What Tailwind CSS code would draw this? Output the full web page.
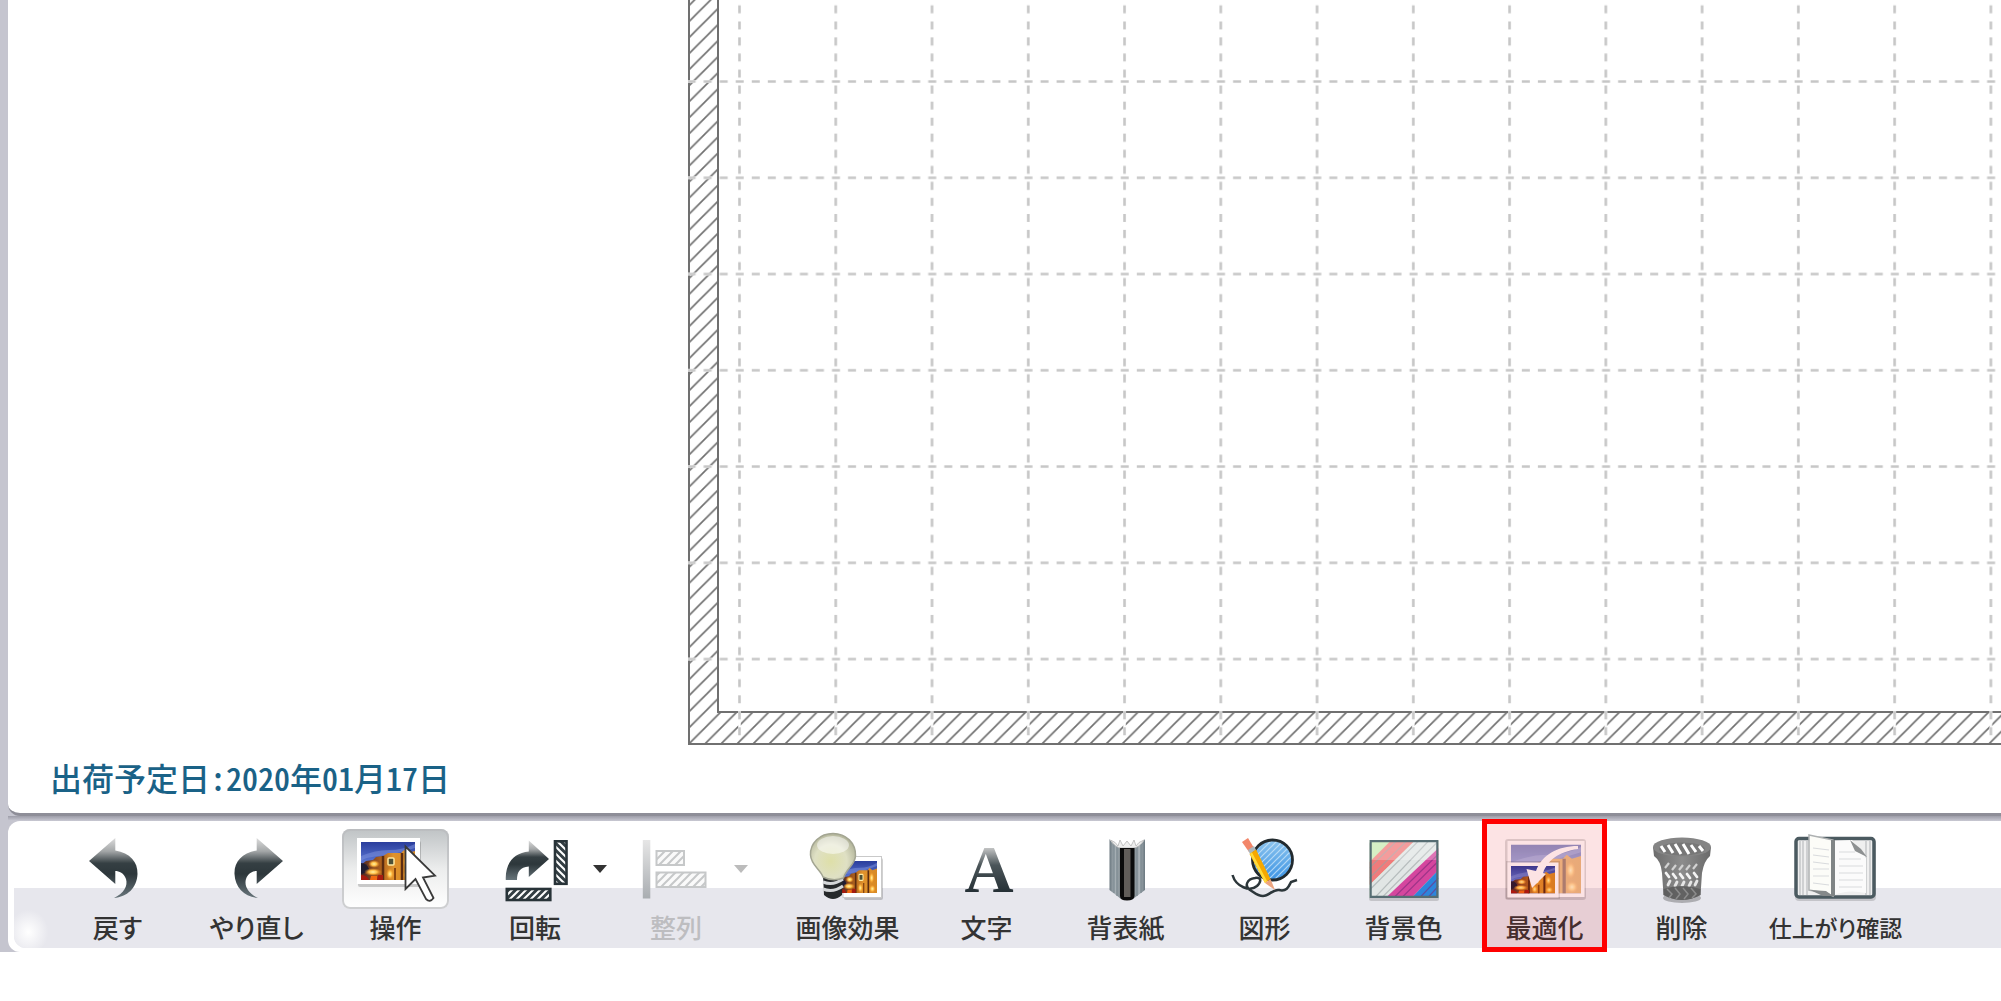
<!DOCTYPE html>
<html lang="ja">
<head>
    <meta charset="UTF-8">
    <meta name="viewport" content="width=device-width, initial-scale=1.0">
    <title>レイアウト編集</title>
    <script src="https://cdn.jsdelivr.net/npm/@tailwindcss/browser@4"></script>
</head>
<body class="bg-white font-['Noto_Sans_CJK_JP',sans-serif] overflow-x-hidden">

    <!-- Shared gradients, patterns and the small photo -->
    <svg class="absolute w-0 h-0" aria-hidden="true">
        <defs>
            <linearGradient id="steel" x1="0" y1="0" x2="0" y2="1">
                <stop offset="0" stop-color="#dcdcdc"/>
                <stop offset=".22" stop-color="#a4a7a8"/>
                <stop offset=".42" stop-color="#353f43"/>
                <stop offset=".6" stop-color="#2d373b"/>
                <stop offset="1" stop-color="#68757b"/>
            </linearGradient>
            <linearGradient id="letter" x1="0" y1="0" x2="0" y2="1">
                <stop offset=".2" stop-color="#cfcfcf"/>
                <stop offset=".45" stop-color="#4b5559"/>
                <stop offset=".8" stop-color="#263136"/>
            </linearGradient>
            <linearGradient id="bar" x1="0" y1="0" x2="0" y2="1">
                <stop offset="0" stop-color="#e6e6e6"/>
                <stop offset="1" stop-color="#a9adb1"/>
            </linearGradient>
            <linearGradient id="sky" x1="0" y1="0" x2="0" y2="1">
                <stop offset="0" stop-color="#2a3d9c"/>
                <stop offset=".5" stop-color="#5873d0"/>
            </linearGradient>
            <linearGradient id="town" x1="0" y1="0" x2="1" y2="0">
                <stop offset="0" stop-color="#4a2626"/>
                <stop offset=".35" stop-color="#a85c1c"/>
                <stop offset=".6" stop-color="#e0922c"/>
                <stop offset="1" stop-color="#d88a24"/>
            </linearGradient>
            <radialGradient id="lamp">
                <stop offset="0" stop-color="#fff3a6"/>
                <stop offset=".45" stop-color="#ffc04a"/>
                <stop offset="1" stop-color="#f08a1c" stop-opacity="0"/>
            </radialGradient>
            <radialGradient id="glass" cx=".45" cy=".6" r=".6">
                <stop offset="0" stop-color="#dedfa8"/>
                <stop offset=".6" stop-color="#dfe0c4"/>
                <stop offset="1" stop-color="#b4b69c"/>
            </radialGradient>
            <linearGradient id="ball" x1="0" y1="0" x2="0" y2="1">
                <stop offset="0" stop-color="#8cc4ee"/>
                <stop offset="1" stop-color="#3d94e4"/>
            </linearGradient>
            <linearGradient id="cover" x1="0" y1="0" x2="1" y2="0">
                <stop offset="0" stop-color="#6b7880"/>
                <stop offset=".15" stop-color="#a9b2b7"/>
                <stop offset=".5" stop-color="#59656b"/>
                <stop offset=".85" stop-color="#a9b2b7"/>
                <stop offset="1" stop-color="#6b7880"/>
            </linearGradient>
            <linearGradient id="metal" x1="0" y1="0" x2="1" y2="0">
                <stop offset="0" stop-color="#6c6c6c"/>
                <stop offset=".5" stop-color="#8c8c8c"/>
                <stop offset="1" stop-color="#6a6a6a"/>
            </linearGradient>
            <pattern id="darkHatch" width="7" height="7" patternUnits="userSpaceOnUse">
                <rect width="7" height="7" fill="#333e43"/>
                <path d="M-2 9L9 -2M-2 2L2 -2M5 9L9 5" stroke="#fff" stroke-width="2"/>
            </pattern>
            <pattern id="darkHatchBack" width="7" height="7" patternUnits="userSpaceOnUse">
                <rect width="7" height="7" fill="#333e43"/>
                <path d="M-2 -2L9 9M5 -2L9 2M-2 5L2 9" stroke="#fff" stroke-width="2"/>
            </pattern>
            <pattern id="paleHatch" width="8" height="8" patternUnits="userSpaceOnUse">
                <rect width="8" height="8" fill="#fafafa"/>
                <path d="M-2 10L10 -2M-2 2L2 -2M6 10L10 6" stroke="#c6c8c9" stroke-width="2"/>
            </pattern>
            <pattern id="shine" width="6" height="6" patternUnits="userSpaceOnUse">
                <path d="M-2 8L8 -2M-2 2L2 -2M4 8L8 4" stroke="#d6ecfb" stroke-width="1.2" opacity=".7"/>
            </pattern>
            <symbol id="photo" viewBox="0 0 54 38" preserveAspectRatio="none">
                <rect width="54" height="38" fill="url(#sky)"/>
                <path d="M0 14Q14 8 28 8T54 2V6Q36 12 18 14T0 20Z" fill="#8093dd" opacity=".5"/>
                <path d="M0 23L5 19L12 18L15 15L22 14L27 11H40L43 8L47 11L54 9V38H0Z" fill="url(#town)"/>
                <path d="M0 21Q6 21 8 27Q7 31 0 32Z" fill="#1f1c33"/>
                <path d="M22 14V38M41 11V38" stroke="#5c2c10" stroke-width="2.500"/>
                <path d="M34 26V38" stroke="#8a4710" stroke-width="2"/>
                <rect x="27" y="16" width="6" height="7" rx="1" fill="#4d5037" stroke="#ffe9a0" stroke-width="1.500"/>
                <ellipse cx="13" cy="22" rx="6" ry="4" fill="url(#lamp)"/>
                <ellipse cx="12" cy="30" rx="9" ry="4" fill="url(#lamp)"/>
                <ellipse cx="29" cy="32" rx="4" ry="6" fill="url(#lamp)"/>
                <ellipse cx="46" cy="20" rx="4" ry="7" fill="url(#lamp)"/>
                <ellipse cx="47" cy="33" rx="5" ry="5" fill="url(#lamp)"/>
                <path d="M0 33Q6 33 8 38H0ZM17 33H22V38H16Z" fill="#a61b10"/>
                <path d="M10 34H16V38H9Z" fill="#f26a12"/>
            </symbol>
        </defs>
    </svg>

    <div class="bg-[#c5c5cf] pl-2">

        <!-- Editing area -->
        <main class="flex items-end justify-between bg-white rounded-bl-xl border-b-3 border-[#8e8e98] pb-[14px]">
            <p class="w-[680px] shrink-0 pl-[42px] text-[32px] leading-[44px] text-[#1a6287] [font-feature-settings:'hwid'] font-medium">出荷予定日:2020年01月17日</p>
            <svg class="flex-1 min-w-0 h-[746px] mb-[53px]" role="img" aria-label="編集ページ">
                <defs>
                    <pattern id="edgeHatch" x="1.8" y="743" width="16.05" height="16.05" patternUnits="userSpaceOnUse">
                        <path d="M-4 20.05L20.05 -4M-4 4L4 -4M12.05 20.05L20.05 12.05" stroke="#707070" stroke-width="1.7"/>
                    </pattern>
                    <pattern id="grid" x="3.4" y="33.4" width="96.26" height="96.26" patternUnits="userSpaceOnUse">
                        <path d="M0 48.1H96.26" stroke="#c6c6c6" stroke-width="2.6" stroke-dasharray="8 8.043" stroke-dashoffset="3.8"/>
                        <path d="M48.1 0V96.26" stroke="#c6c6c6" stroke-width="2.6" stroke-dasharray="8 8.043" stroke-dashoffset="12"/>
                    </pattern>
                    <!-- white gaps where the grid crosses the hatched edge -->
                    <pattern id="gapRows" x="0" y="33.4" width="40" height="96.26" patternUnits="userSpaceOnUse">
                        <path d="M0 48.1H40" stroke="#fff" stroke-width="2.6"/>
                    </pattern>
                    <pattern id="gapColumns" x="3.4" y="700" width="96.26" height="60" patternUnits="userSpaceOnUse">
                        <path d="M48.1 0V60" stroke="#fff" stroke-width="2.6"/>
                    </pattern>
                </defs>
                <rect x="1" y="0" width="29" height="744" fill="url(#edgeHatch)"/>
                <rect x="30" y="712" width="100%" height="32" fill="url(#edgeHatch)"/>
                <rect x="0" y="0" width="2" height="745" fill="#707070"/>
                <rect x="0" y="743" width="100%" height="2" fill="#707070"/>
                <rect x="29" y="0" width="2" height="713" fill="#707070"/>
                <rect x="29" y="711" width="100%" height="2" fill="#707070"/>
                <rect x="0" y="0" width="24" height="700" fill="url(#gapRows)"/>
                <rect x="31" y="711" width="100%" height="25" fill="url(#gapColumns)"/>
                <rect x="0" y="0" width="100%" height="736" fill="url(#grid)"/>
            </svg>
        </main>

        <!-- Toolbar -->
        <div class="h-[5px] bg-linear-to-b from-[#9d9da8] to-[#c9c9d3]"></div>
        <nav class="relative bg-white rounded-l-xl pl-[6px] pt-[67px] pb-1" aria-label="ツール">
            <div class="h-[60px] bg-[#e7e7ed] rounded-bl-xl flex items-end">
                <div class="w-9 h-10 rounded-bl-xl bg-radial-[at_40%_60%] from-white to-[#e7e7ed] to-65%"></div>
            </div>
            <div class="absolute inset-0 flex items-start pl-10 pt-2 text-[26px] leading-[36px] font-medium text-[#333] whitespace-nowrap [font-feature-settings:'palt']">

                <button type="button" class="w-[139px] shrink-0 flex flex-col items-center">
                    <svg class="w-[107px] h-20" viewBox="0 0 107 80" aria-hidden="true">
                        <path d="M25 32L51.300 9V21.500C66 24 74 33 73.500 45C73 59 63 68 50 69C60 64 64 57 62 50C60 44 55 42 51.300 42V55Z" fill="url(#steel)"/>
                    </svg>
                    戻す
                </button>
                <button type="button" class="w-[139px] shrink-0 flex flex-col items-center">
                    <svg class="w-[107px] h-20" viewBox="0 0 107 80" aria-hidden="true">
                        <path transform="translate(105 0) scale(-1 1)" d="M25 32L51.300 9V21.500C66 24 74 33 73.500 45C73 59 63 68 50 69C60 64 64 57 62 50C60 44 55 42 51.300 42V55Z" fill="url(#steel)"/>
                    </svg>
                    やり直し
                </button>
                <button type="button" aria-pressed="true" class="w-[139px] shrink-0 flex flex-col items-center">
                    <span class="w-[107px] h-20 rounded-lg bg-linear-to-b from-[#bfc3c5] via-[#eceded] to-white inset-ring-2 inset-ring-[#b9bbbe]/70">
                        <svg class="w-[107px] h-20" viewBox="0 0 107 80" aria-hidden="true">
                            <rect x="16" y="12" width="63" height="46" rx="2" fill="#000" opacity=".18"/>
                            <rect x="15" y="9" width="63" height="46" fill="#fff"/>
                            <use href="#photo" x="19" y="13" width="54" height="38"/>
                            <path d="M63.500 17.500V60L73.500 50L84 70Q88 74 91.500 69L81 48.500L93 46.700Z" fill="#fff" stroke="#3a3a3a" stroke-width="1.800"/>
                        </svg>
                    </span>
                    操作
                </button>

                <div class="flex ml-4">
                    <button type="button" class="w-[108px] shrink-0 flex flex-col items-center">
                        <svg class="w-[107px] h-20" viewBox="0 0 107 80" aria-hidden="true">
                            <path d="M23.800 51C23 34 32 24 46.800 22.500V11.500L67 30L46.800 48V37.500C38 38 35 43 35 51Z" fill="url(#steel)"/>
                            <rect x="73" y="12.300" width="11.500" height="42.500" fill="url(#darkHatchBack)" stroke="#283338" stroke-width="2.600"/>
                            <rect x="24.800" y="60" width="43.500" height="11" fill="url(#darkHatch)" stroke="#283338" stroke-width="2.600"/>
                        </svg>
                        回転
                    </button>
                    <button type="button" aria-label="回転メニュー" class="w-[22px] h-20 flex justify-center items-center">
                        <svg class="w-4 h-2" viewBox="0 0 16 8" aria-hidden="true"><path d="M1 0H15L8 8Z" fill="#333"/></svg>
                    </button>
                </div>

                <div class="flex ml-[11px]">
                    <button type="button" disabled class="w-[108px] shrink-0 flex flex-col items-center text-[#bdbdc0]">
                        <svg class="w-[107px] h-20" viewBox="0 0 107 80" aria-hidden="true">
                            <rect x="19.800" y="11" width="7.500" height="58.500" fill="url(#bar)"/>
                            <rect x="33.500" y="22" width="27.500" height="14" fill="url(#paleHatch)" stroke="#c6c8c9" stroke-width="2"/>
                            <rect x="33.500" y="43.500" width="49" height="14.500" fill="url(#paleHatch)" stroke="#c6c8c9" stroke-width="2"/>
                        </svg>
                        整列
                    </button>
                    <button type="button" disabled aria-label="整列メニュー" class="w-[22px] h-20 flex justify-center items-center">
                        <svg class="w-4 h-2" viewBox="0 0 16 8" aria-hidden="true"><path d="M1 0H15L8 8Z" fill="#bcbcbc"/></svg>
                    </button>
                </div>

                <button type="button" class="w-[139px] shrink-0 flex flex-col items-center ml-[26px]">
                    <svg class="w-[107px] h-20" viewBox="0 0 107 80" aria-hidden="true">
                        <rect x="50" y="29" width="39" height="42" rx="2" fill="#000" opacity=".18"/>
                        <rect x="49" y="27.500" width="38.500" height="41" fill="#fff" stroke="#c9c9c9"/>
                        <use href="#photo" x="47" y="32" width="36" height="32"/>
                        <path d="M29 46H49L48 66Q39 74 30 66Z" fill="#26292b"/>
                        <path d="M29 53Q39 57 49 50M29 60Q39 64 49 57" fill="none" stroke="#d4d6d8" stroke-width="3"/>
                        <path d="M39 4.500C52 4.500 62 14 61.500 27C61 36 52 40 49.500 49Q39 53 29 48C26 40 17 36 16.500 26C16 14 26 4.500 39 4.500Z" fill="url(#glass)" stroke="#a3a592" stroke-width="1.500"/>
                        <ellipse cx="39" cy="16" rx="16" ry="9" fill="#fff" opacity=".5"/>
                    </svg>
                    画像効果
                </button>
                <button type="button" class="w-[139px] shrink-0 flex flex-col items-center">
                    <svg class="w-[107px] h-20" viewBox="0 0 107 80" aria-hidden="true">
                        <text x="56" y="63" text-anchor="middle" class="font-['Liberation_Serif',serif] font-bold text-[68px]" fill="url(#letter)">A</text>
                    </svg>
                    文字
                </button>
                <button type="button" class="w-[139px] shrink-0 flex flex-col items-center">
                    <svg class="w-[107px] h-20" viewBox="0 0 107 80" aria-hidden="true">
                        <path d="M37.500 10Q41 17 49 19H61Q69 17 73 10V61L61 70H49L37.500 61Z" fill="url(#cover)"/>
                        <path d="M42 15V64M45 17V67M65 17V67M69 15V64" stroke="#74828a" stroke-width="1"/>
                        <path d="M38.500 11Q44 19 49 19H61Q67 19 72 11Q66 13 64 17L62 11L59 17L55 12L51 17L48 11L46 17Q44 13 38.500 11Z" fill="#eee" stroke="#b5b5b5" stroke-width=".8"/>
                        <path d="M48 19H62.500V67Q62 71.500 55 71.500T48 67Z" fill="#0b0b0b"/>
                        <path d="M52 20H58.500V68H52Z" fill="#615d59"/>
                    </svg>
                    背表紙
                </button>
                <button type="button" class="w-[139px] shrink-0 flex flex-col items-center">
                    <svg class="w-[107px] h-20" viewBox="0 0 107 80" aria-hidden="true">
                        <circle cx="61.500" cy="31" r="20" fill="url(#ball)"/>
                        <circle cx="61.500" cy="31" r="20" fill="url(#shine)" stroke="#222a2e" stroke-width="2.800"/>
                        <path d="M21.500 46C25 58 39 63 46 57C51 52 50 48 44 49C36 50 33 57 39 61C44 64 46 67 52 67C58 67 62 60 68 61C76 63 78 57 80 53L86 51" fill="none" stroke="#2c363a" stroke-width="2.500"/>
                        <path d="M31 13L37 9L43 19L38 23Z" fill="#f2866a"/>
                        <path d="M37 21L43 17L45 21L39 25Z" fill="#aab6bd"/>
                        <path d="M38.500 25L45 20.500L59.500 50L54 54Z" fill="#f6a800"/>
                        <path d="M39 25L41 23.500L56 52L54 54Z" fill="#ffdc3c"/>
                        <path d="M54 54L59.500 50L64 61Z" fill="#eda580"/>
                    </svg>
                    図形
                </button>
                <button type="button" class="w-[139px] shrink-0 flex flex-col items-center">
                    <svg class="w-[107px] h-20" viewBox="0 0 107 80" aria-hidden="true">
                        <rect x="19" y="13" width="70" height="59" rx="2" fill="#000" opacity=".15"/>
                        <svg x="19.500" y="11" width="69" height="58" viewBox="0 0 69 58">
                            <rect width="69" height="58" fill="#c9eab2"/>
                            <path d="M0 22L22 0H46L0 45Z" fill="#f17c7c"/>
                            <path d="M0 45L46 0H69V9L18 58H0Z" fill="#e2e6e5"/>
                            <path d="M16 58L69 8V30L42 58Z" fill="#d5489f"/>
                            <path d="M42 58L69 30V58Z" fill="#2e86dc"/>
                            <path d="M0 28L28 0M0 38L38 0M0 50L50 0M5 58L60 0M12 58L69 1" stroke="#9aa3a3" stroke-width="1.200" opacity=".6"/>
                            <path d="M24 58L69 14M32 58L69 21M50 58L69 38M58 58L69 46" stroke="#7b2a7b" stroke-width="1.200" opacity=".6"/>
                            <path d="M0 0H69V20L0 20Z" fill="#fff" opacity=".25"/>
                            <rect x="1" y="1" width="67" height="56" fill="none" stroke="#566d73" stroke-width="2.500"/>
                        </svg>
                    </svg>
                    背景色
                </button>
                <button type="button" class="relative w-[125px] shrink-0 flex flex-col items-center ml-[9px]">
                    <svg class="w-[107px] h-20" viewBox="0 0 107 80" aria-hidden="true">
                        <rect x="14" y="10" width="81" height="61" rx="3" fill="#000" opacity=".14"/>
                        <rect x="16.500" y="12" width="77" height="56" fill="#fff"/>
                        <use href="#photo" x="20" y="15.500" width="70" height="49" opacity=".55"/>
                        <rect x="15" y="32" width="54" height="38" fill="#000" opacity=".12"/>
                        <rect x="16.500" y="33.500" width="51" height="35" fill="#fff"/>
                        <use href="#photo" x="20" y="37" width="44" height="27.500"/>
                        <path d="M87 17C66 17 51 26 45 42L35.500 40L41 59L55 45L52 44C57 31 67 23 87 20Z" fill="#fff"/>
                    </svg>
                    最適化
                    <span class="absolute inset-x-0 -top-[10px] h-[133px] border-5 border-[#ff0000] bg-red-600/11"></span>
                </button>
                <button type="button" class="w-[139px] shrink-0 flex flex-col items-center ml-[5px]">
                    <svg class="w-[107px] h-20" viewBox="0 0 107 80" aria-hidden="true">
                        <ellipse cx="54" cy="69" rx="19" ry="5" fill="#000" opacity=".25"/>
                        <path d="M25 18L26 27Q33 32 34 44L35.500 66Q54 76 72.500 66L74 44Q76 32 82 27L83 18Z" fill="url(#metal)"/>
                        <ellipse cx="54" cy="18" rx="29" ry="9.500" fill="#858585"/>
                        <ellipse cx="54" cy="20" rx="23" ry="6.500" fill="#777"/>
                        <path d="M33 17L37 23M40 16L45 24M47 15L53 25M55 15L61 25M63 16L68 23M71 17L75 22" stroke="#fff" stroke-width="3"/>
                        <!-- wire mesh rows -->
                        <path d="M37 39L41 34M44 41L48 36M51 41L55 36M58 41L62 36M65 40L69 35" stroke="#d2d2d2" stroke-width="2.200"/>
                        <path d="M38 44L41 48M45 45L48 49M52 45L55 49M59 45L62 49M66 44L69 48" stroke="#f4f4f4" stroke-width="2.800" stroke-linecap="round"/>
                        <path d="M40 56L42 52M47 57L49 53M54 57L56 53M61 57L63 53M67 56L69 52" stroke="#e6e6e6" stroke-width="2.800" stroke-linecap="round"/>
                        <path d="M35.500 60Q54 54 72.500 60V66Q54 76 35.500 66Z" fill="#5a5a5a" opacity=".85"/>
                        <path d="M39 60L44 65L41 69M47 59L52 65L48 70M55 59L60 65L56 70M63 59L68 65L64 69" fill="none" stroke="#8c8c8c" stroke-width="1.500"/>
                    </svg>
                    削除
                </button>
                <button type="button" class="w-[139px] shrink-0 flex flex-col items-center ml-[15px] text-[23px]">
                    <svg class="w-[107px] h-20" viewBox="0 0 107 80" aria-hidden="true">
                        <rect x="13" y="11" width="81" height="61" rx="4" fill="#000" opacity=".15"/>
                        <rect x="14" y="9.500" width="78" height="58.500" rx="3" fill="#efefef" stroke="#4b5a60" stroke-width="3.500"/>
                        <path d="M18 12V66M21 12V66M25 12V66M84 12V66M88 12V66" stroke="#b9bcbe" stroke-width="1.200"/>
                        <path d="M52 12L70 11L84 29V64Q66 60 52 66Z" fill="#fbfbfb"/>
                        <path d="M57 23H73M57 30H79M57 37H81M57 44H81M57 51H81M57 58H80" stroke="#d9dbdd" stroke-width="1.200"/>
                        <path d="M68 11L73 22L85 28L79 20Z" fill="#8d9091"/>
                        <path d="M27 6L51 11V67L44 64L27 61Z" fill="#fcfcf8" stroke="#aeb1b2" stroke-width="1.500"/>
                        <path d="M31 19L47 21M31 26L47 28M31 33L47 35M31 40H47M31 47H47M31 54L47 56" stroke="#d9dbdd" stroke-width="1.200"/>
                        <path d="M49 11H53V67H49Z" fill="#808586"/>
                        <path d="M28 61L44 62L51 67H41Z" fill="#85898a"/>
                    </svg>
                    仕上がり確認
                </button>
            </div>
        </nav>
    </div>
</body>
</html>
